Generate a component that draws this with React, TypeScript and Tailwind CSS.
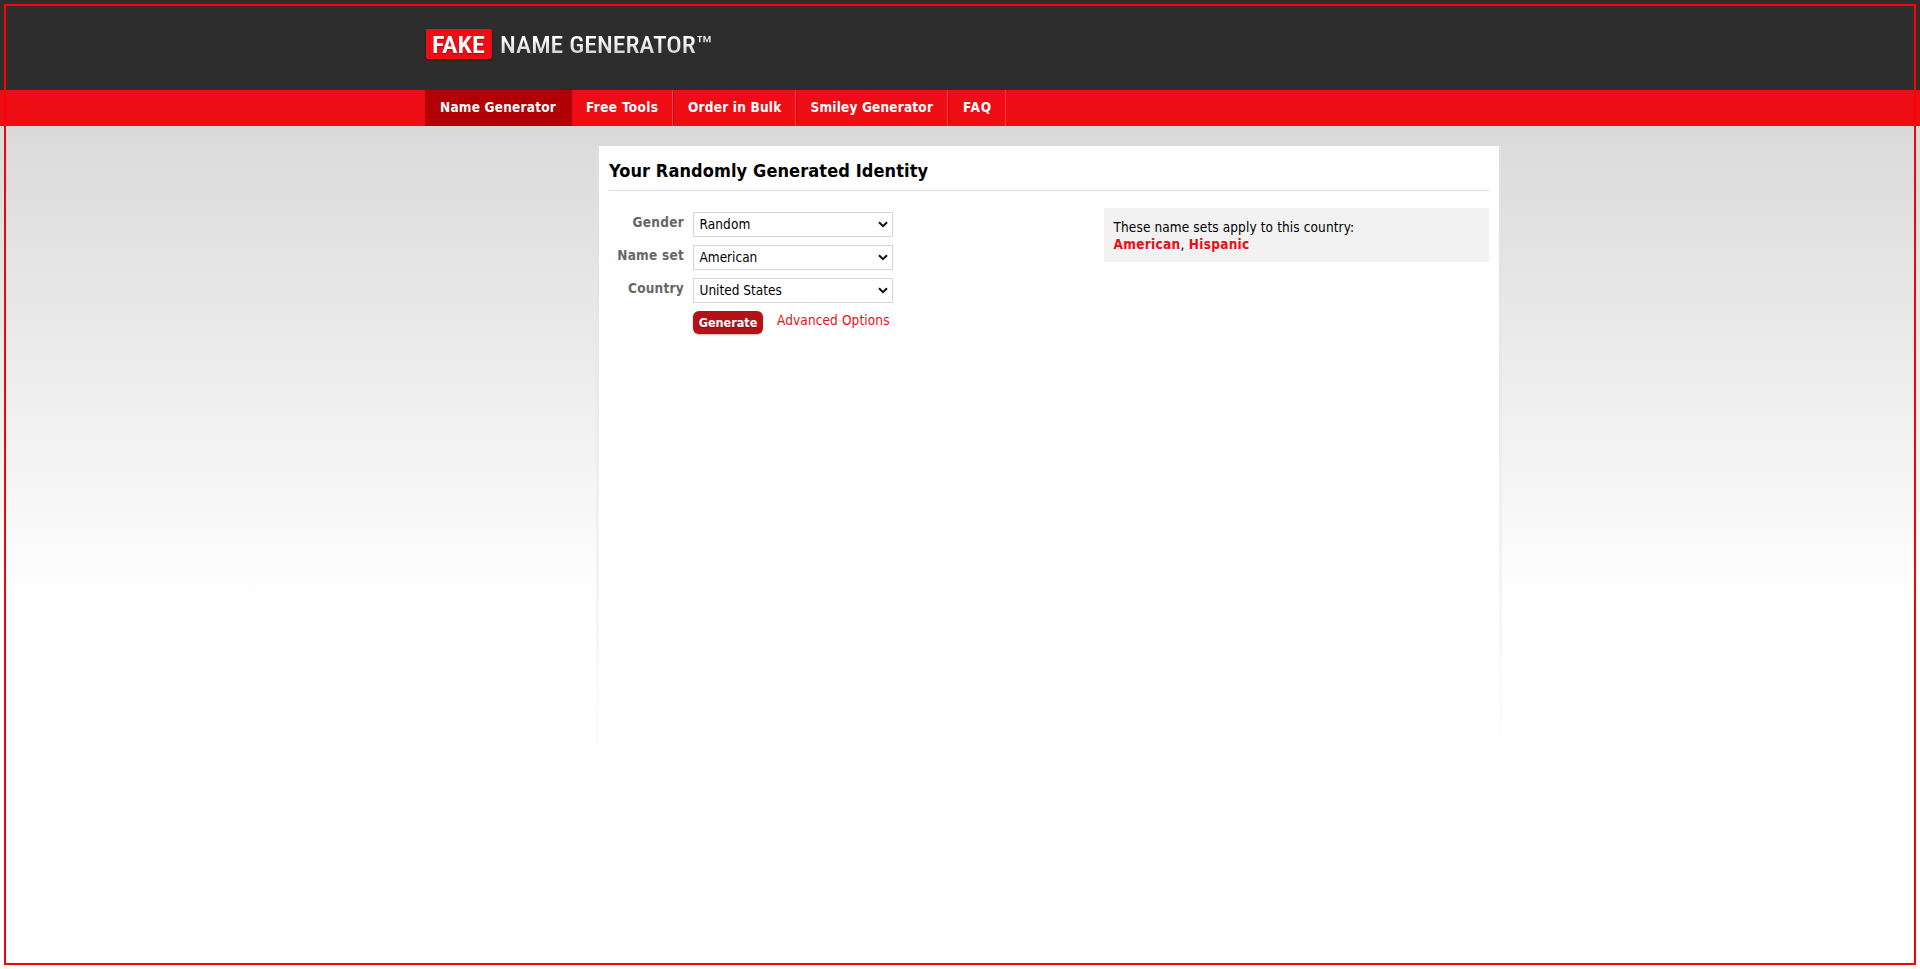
import React from 'react';

const navItems = [
  { label: 'Name Generator', box: 'w-[147px] bg-[#b10006] pl-[15px]', text: 'tracking-[0.22px]' },
  { label: 'Free Tools', box: 'w-[101px] border-r border-[#fb4046] pl-[14px]', text: 'tracking-[0.37px]' },
  { label: 'Order in Bulk', box: 'w-[123px] border-r border-l border-r-[#fb4046] border-l-[#c9080e] pl-[14px]', text: 'tracking-[0.22px]' },
  { label: 'Smiley Generator', box: 'w-[152px] border-r border-l border-r-[#fb4046] border-l-[#c9080e] pl-[13.5px]', text: 'tracking-[0.19px]' },
  { label: 'FAQ', box: 'w-[58px] border-r border-l border-r-[#fb4046] border-l-[#c9080e] pl-[14px]', text: 'tracking-[0.8px]' },
];

const fields = [
  { label: 'Gender', value: 'Random', labelText: 'tracking-[0.3px]', valueText: 'tracking-[0.1px]' },
  { label: 'Name set', value: 'American', labelText: 'tracking-[0.25px]', valueText: 'tracking-[0px]' },
  { label: 'Country', value: 'United States', labelText: 'tracking-[0.25px]', valueText: 'tracking-[0px]' },
];

function Logo() {
  return (
    <div className="flex h-[30px] font-['Roboto',sans-serif] text-[24px] leading-[32px] font-medium">
      <div className="h-[30px] w-[66px] rounded-[2px] bg-[#ef0d15] pl-[6px] text-white shadow-[0_1px_2px_rgba(0,0,0,0.6)] [text-shadow:0_1px_1px_rgba(0,0,0,0.35)]">
        <span className="inline-block origin-left scale-x-[1.09] font-semibold">FAKE</span>
      </div>
      <div className="ml-[7.5px] w-[195.5px]">
        <span className="inline-block origin-left scale-x-[1.07] bg-linear-to-b from-white from-30% to-[#cfcfcf] to-80% bg-clip-text whitespace-nowrap text-transparent">
          NAME GENERATOR
        </span>
      </div>
      <span className="w-[18px] origin-top-left scale-x-[1.4] font-normal text-[#eeeeee]">™</span>
    </div>
  );
}

function Field({ label, value, labelText, valueText }: (typeof fields)[number]) {
  return (
    <div className="flex h-[33px]">
      <div className="w-[75px] text-right text-[13.5px] leading-[20px] font-bold text-[#666]">
        <span className={labelText}>{label}</span>
      </div>
      <div className="ml-[9px] flex h-[25px] w-[200px] items-center justify-between border border-[#d6d6d6] bg-white pr-[4px] pl-[5.5px] text-[13.5px] text-black">
        <span className={valueText}>{value}</span>
        <svg width="10" height="7" viewBox="0 0 10 7" fill="none">
          <path d="M1 1.2 5 5.2 9 1.2" stroke="#111" strokeWidth="2" />
        </svg>
      </div>
    </div>
  );
}

export default function App() {
  return (
    <div className="relative flex h-[969px] w-full flex-col overflow-hidden bg-white font-['DejaVu_Sans_Condensed','DejaVu_Sans',sans-serif] [font-stretch:condensed]">
      <header className="h-[90px] shrink-0 bg-[#2d2d2d] pt-[29px] pl-[426px]">
        <Logo />
      </header>
      <nav className="flex h-[36px] shrink-0 bg-[#ef0d15] pl-[425px]">
        {navItems.map((n) => (
          <a key={n.label} className={`${n.box} h-[36px] text-[13.5px] leading-[35px] font-bold whitespace-nowrap text-white`}>
            <span className={n.text}>{n.label}</span>
          </a>
        ))}
      </nav>
      <main className="flex grow bg-linear-to-b from-[#dadada] to-white to-[480px] pt-[20px] pl-[596px]">
        <div className="h-[620px] bg-linear-to-b from-[#dedede] via-[#f3f3f3] via-67% to-white px-[3px]">
          <div className="h-[620px] w-[900px] bg-white px-[10px]">
            <h1 className="h-[45px] border-b border-[#dcdcdc] pt-[11px] text-[18px] leading-[28px] font-bold text-black">
              <span className="tracking-[0.1px]">Your Randomly Generated Identity</span>
            </h1>
            <div className="flex justify-between pt-[17px]">
              <div className="pt-[4px]">
                {fields.map((f) => (
                  <Field key={f.label} {...f} />
                ))}
                <div className="flex pl-[84px]">
                  <button className="h-[23px] w-[70px] rounded-[6px] bg-[#b51218] text-[12.5px] leading-[22px] font-bold text-white shadow-[0_1px_2px_rgba(0,0,0,0.3)] [text-shadow:0_1px_1px_rgba(0,0,0,0.3)]">
                    <span className="tracking-[0px]">Generate</span>
                  </button>
                  <a className="ml-[14px] text-[13.5px] leading-[19px] whitespace-nowrap text-[#ed0d15]">
                    <span className="tracking-[0.12px]">Advanced Options</span>
                  </a>
                </div>
              </div>
              <aside className="h-[54px] w-[385px] bg-[#f2f2f2] px-[9.5px] pt-[11px] text-[13.5px] leading-[17px] text-black">
                <div><span className="tracking-[0.12px]">These name sets apply to this country:</span></div>
                <div className="tracking-[0.3px]">
                  <b className="text-[#ed0d15]">American</b>, <b className="text-[#ed0d15]">Hispanic</b>
                </div>
              </aside>
            </div>
          </div>
        </div>
      </main>
      <div className="pointer-events-none absolute top-[4px] left-[4px] h-[961px] w-[1912px] border-2 border-[#ff0000]" />
    </div>
  );
}
